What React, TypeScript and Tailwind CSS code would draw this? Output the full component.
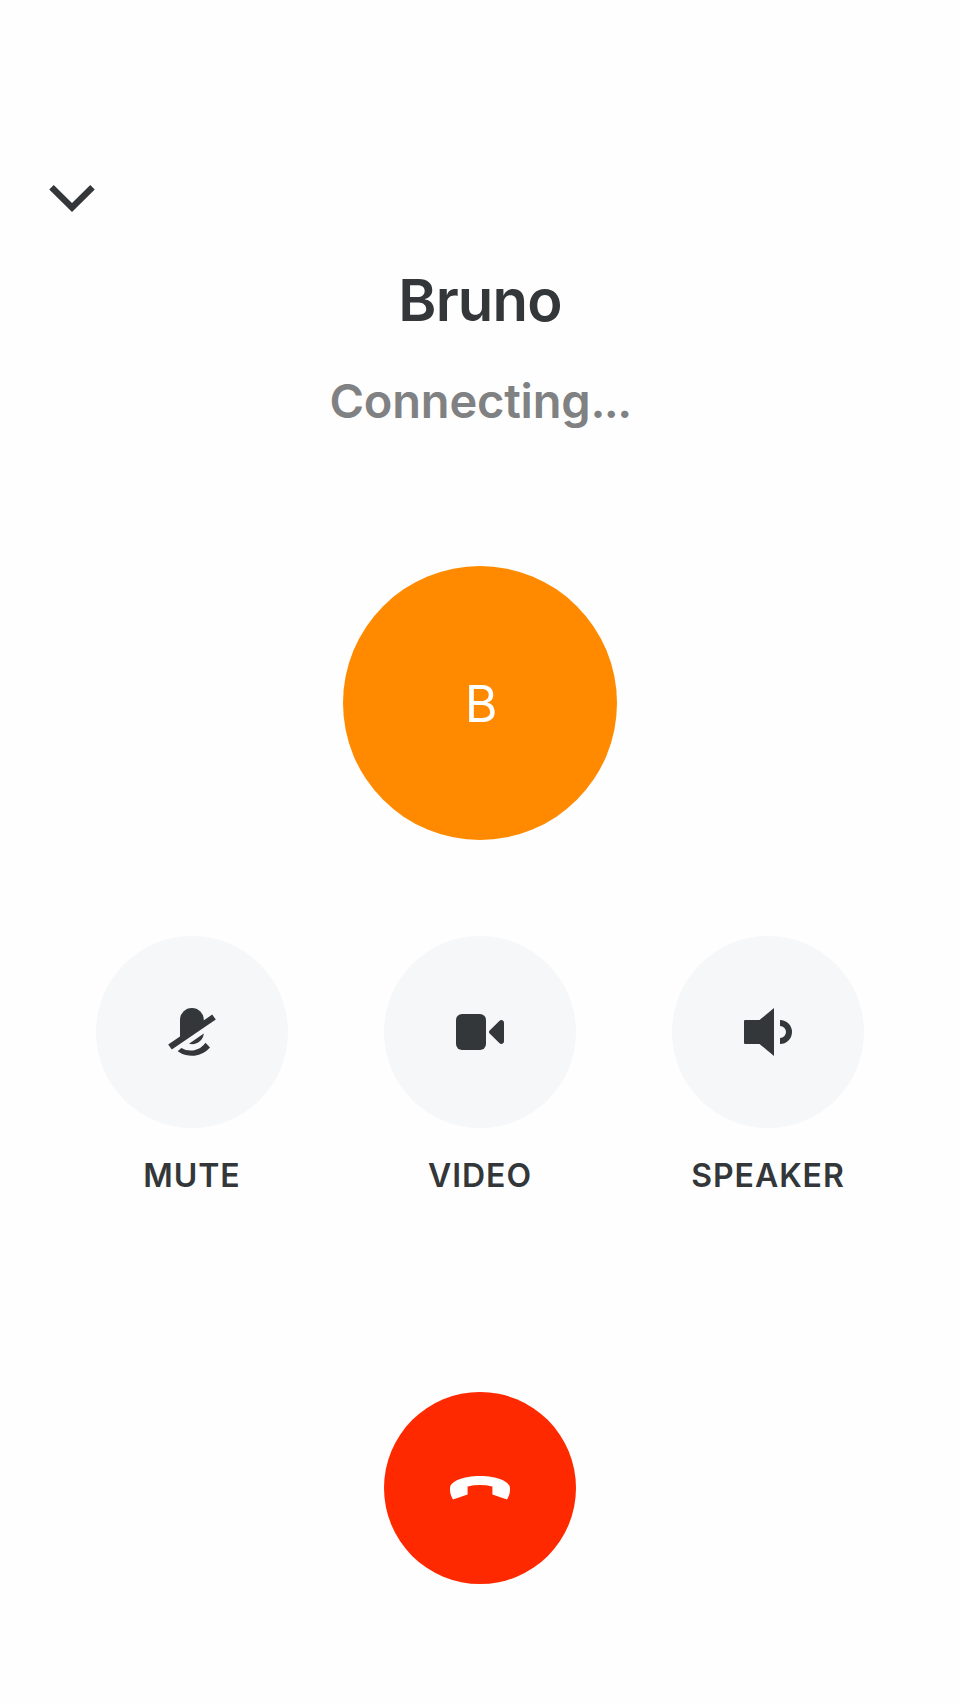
import type { ReactNode } from "react";

function MicOffIcon() {
  return (
    <svg width="64" height="64" viewBox="0 0 64 64" fill="#33373a">
      <path d="M20 38V19.9A11.9 11.9 0 0 1 43.8 19.9V24L22 40Z" />
      <path d="M29 43.8L43.8 33.6C43.2 39.5 38.4 44.3 32 44.3C30.9 44.3 29.9 44.1 29 43.8Z" />
      <path d="M8.2 44.4L52.2 14.6L55.8 19.6L11.8 49.4Z" />
      <path d="M17.7 51.2A24 24 0 0 0 50 47.6L45.5 42.8A18 18 0 0 1 21.3 47.9Z" />
    </svg>
  );
}

function VideoIcon() {
  return (
    <svg width="64" height="64" viewBox="0 0 64 64" fill="#33373a">
      <rect x="8" y="14" width="30" height="36" rx="6" />
      <path d="M41.4 30.7L51.3 20.9C53 19.2 56 20.2 56 22.8V41.2C56 43.8 53 44.8 51.3 43.1L41.4 33.3Q40.4 32 41.4 30.7Z" />
    </svg>
  );
}

function SpeakerIcon() {
  return (
    <svg width="64" height="64" viewBox="0 0 64 64" fill="#33373a">
      <path d="M9 20H23.5L38 8V56L23.5 44H9Q8 44 8 43V21Q8 20 9 20Z" />
      <path d="M44 20A12 12 0 0 1 44 44V38A6 6 0 0 0 44 26Z" />
    </svg>
  );
}

function HangUpIcon() {
  return (
    <svg width="80" height="46" viewBox="0 0 80 46" fill="#fff">
      <path d="M13 34.6C10.5 30.5 9.7 26.5 10.1 22.5C10.5 16.5 23 11 40 11S69.5 16.5 69.9 22.5C70.3 26.5 69.5 30.5 67 34.6L52.4 29.5V21.5Q40 18.7 27.6 21.5V29.5Z" />
    </svg>
  );
}

function Control({ label, children }: { label: string; children: ReactNode }) {
  return (
    <button className="flex w-48 flex-col items-center">
      <span className="flex size-48 items-center justify-center rounded-full bg-[#f6f7f9]">{children}</span>
      <span className="mt-7 text-[32px] leading-10 font-semibold tracking-[0.95px]">{label}</span>
    </button>
  );
}

export default function App() {
  return (
    <main className="flex h-[1704px] w-[960px] flex-col items-center bg-[#fefefe] font-['Inter',sans-serif] text-[#33373a]">
      <header className="flex h-[270px] w-full items-start px-12 pt-[180px]">
        <button aria-label="Minimize">
          <svg width="48" height="36" viewBox="0 0 48 36" fill="none">
            <path d="M3.5 7.3L24 27.6L44.5 7.3" stroke="#33373a" strokeWidth="6.4" />
          </svg>
        </button>
      </header>
      <h1 className="text-[58px] leading-[60px] font-semibold tracking-[-0.8px]">Bruno</h1>
      <p className="mt-[41px] text-[47px] leading-[60px] font-semibold tracking-[-0.2px] text-[#808183]">
        Connecting<span className="tracking-[-1.6px]">...</span>
      </p>
      <div className="mt-[135px] flex size-[274px] shrink-0 items-center justify-center rounded-full bg-[#ff8a00] pt-[2px] pl-[2px] text-[50px] leading-none text-white">
        B
      </div>
      <div className="mt-24 flex gap-24">
        <Control label="MUTE">
          <MicOffIcon />
        </Control>
        <Control label="VIDEO">
          <VideoIcon />
        </Control>
        <Control label="SPEAKER">
          <SpeakerIcon />
        </Control>
      </div>
      <button aria-label="End call" className="mt-[196px] flex size-48 shrink-0 items-center justify-center rounded-full bg-[#ff2900]">
        <HangUpIcon />
      </button>
    </main>
  );
}
